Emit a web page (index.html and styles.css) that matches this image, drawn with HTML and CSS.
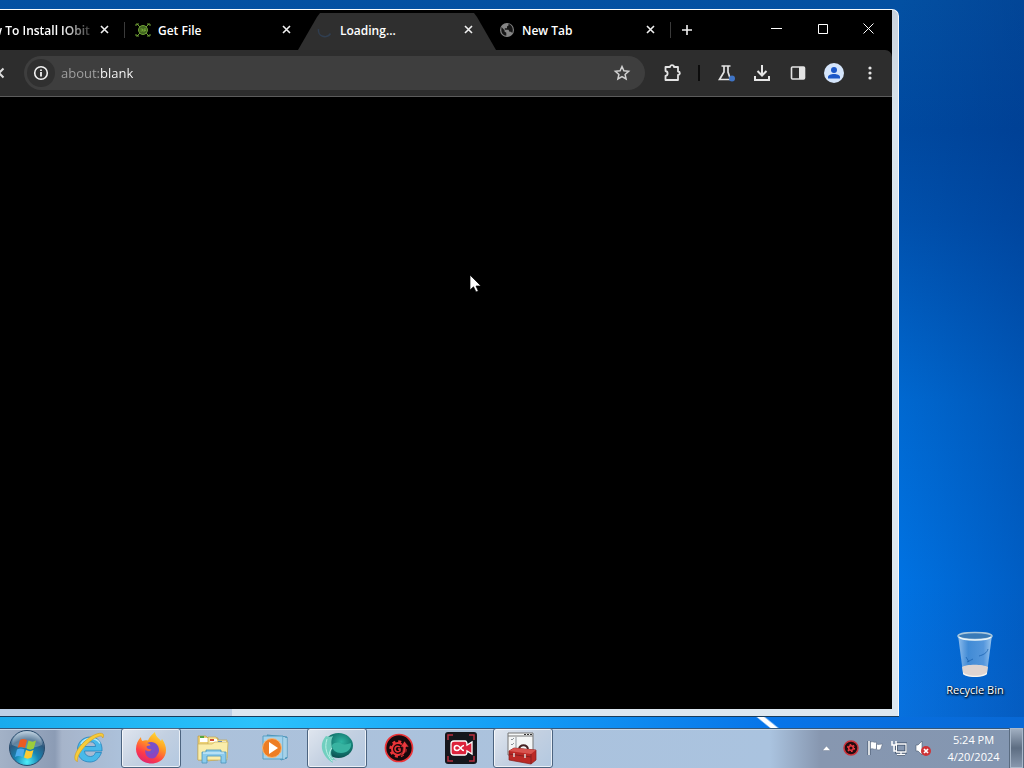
FILE: index.html
```html
<!DOCTYPE html>
<html lang="en">
<head>
  <meta charset="utf-8">
  <title>Desktop</title>
  <link rel="stylesheet" href="styles.css">
</head>
<body>
  <main class="desktop">
    <section class="window">
      <div class="browser">
        <div class="titlebar">
          <div class="tabs">
            <div class="tab">
              <span class="favicon"></span>
              <span class="tab-title faded">How To Install IObit</span>
              <button class="tab-close" aria-label="Close tab"><svg width="10" height="10" viewBox="0 0 10 10"><path d="M1 1l7 7M8 1l-7 7"/></svg></button>
            </div>
            <div class="tab divided">
              <span class="favicon">
                <svg width="16" height="16" viewBox="0 0 16 16" fill="none" stroke="#6f9f35">
                  <path d="M1 4V2h3M2 2l3 3M15 4V2h-3M14 2l-3 3M1 12v2h3M2 14l3-3M15 12v2h-3M14 14l-3-3"/>
                  <circle cx="8" cy="8" r="4.500" fill="#40651f"/>
                  <path d="M5.500 7h2v2h-2M9 10V7h2M9 8.500h2"/>
                </svg>
              </span>
              <span class="tab-title">Get File</span>
              <button class="tab-close" aria-label="Close tab"><svg width="10" height="10" viewBox="0 0 10 10"><path d="M1 1l7 7M8 1l-7 7"/></svg></button>
            </div>
            <div class="tab active">
              <span class="favicon">
                <svg width="16" height="16" viewBox="0 0 16 16" fill="none" stroke="#303e50" stroke-width="1.500"><path d="M1.500 7a6.500 6.500 0 0 0 12 4.500"/></svg>
              </span>
              <span class="tab-title">Loading...</span>
              <button class="tab-close" aria-label="Close tab"><svg width="10" height="10" viewBox="0 0 10 10"><path d="M1 1l7 7M8 1l-7 7"/></svg></button>
            </div>
            <div class="tab">
              <span class="favicon">
                <svg width="16" height="16" viewBox="0 0 16 16">
                  <circle cx="8" cy="8" r="7" fill="#858585"/>
                  <path d="M2.500 5l3 3.200v1.300l1.800 1.200v3C4.200 13.500 2.300 11 2.300 8zM9.500 1.800v1.700L8 4.500v1.800H5.800v1.500h3.700l1 2H12l1.200 1.200c1.500-3.500.3-7.800-3.700-9.200z" fill="#161616"/>
                </svg>
              </span>
              <span class="tab-title">New Tab</span>
              <button class="tab-close" aria-label="Close tab"><svg width="10" height="10" viewBox="0 0 10 10"><path d="M1 1l7 7M8 1l-7 7"/></svg></button>
            </div>
            <button class="new-tab" aria-label="New tab"><svg width="12" height="12" viewBox="0 0 12 12"><path d="M6 1v10M1 6h10"/></svg></button>
          </div>
          <div class="captions">
            <button class="caption" aria-label="Minimize"><svg width="12" height="12" viewBox="0 0 12 12"><path d="M0 5.500h11"/></svg></button>
            <button class="caption" aria-label="Maximize"><svg width="12" height="12" viewBox="0 0 12 12"><path d="M1.500 1.500h9v9h-9z"/></svg></button>
            <button class="caption" aria-label="Close"><svg width="12" height="12" viewBox="0 0 12 12"><path d="M.5.5l10 10M10.500.5l-10 10"/></svg></button>
          </div>
        </div>

        <div class="toolbar">
          <button class="tool stop" aria-label="Stop loading"><svg width="12" height="12" viewBox="0 0 12 12" fill="none" stroke="#ddd" stroke-width="2"><path d="M1.500 1.500l9 9M10.500 1.500l-9 9"/></svg></button>
          <div class="omnibox">
            <button class="site-info" aria-label="View site information">
              <svg width="16" height="16" viewBox="0 0 16 16" fill="none" stroke="#f2f2f2"><circle cx="8" cy="8" r="6.300" stroke-width="1.600"/><path d="M8 7v4.500M8 4.500V6" stroke-width="1.800"/></svg>
            </button>
            <input class="address" type="text" value="about:blank" aria-label="Address and search bar">
            <button class="tool" aria-label="Bookmark this tab">
              <svg width="18" height="18" viewBox="0 0 18 18" fill="none" stroke="#d2d2d2" stroke-width="1.500"><path d="M9 2.500l1.900 4.300 4.700.5-3.500 3.100 1 4.600L9 12.700 4.900 15l1-4.600-3.500-3.100 4.700-.5z"/></svg>
            </button>
          </div>
          <button class="tool" aria-label="Extensions">
            <svg width="20" height="20" viewBox="0 0 20 20" fill="none" stroke="#e3e3e3" stroke-width="1.800"><path d="M3.500 4H8c0-2.500 4-2.500 4 0h4v4.500c2.500.3 2.500 3.200 0 3.500v5H3.500v-4c2.800-.5 2.800-4.500 0-5z" stroke-linejoin="round"/></svg>
          </button>
          <span class="tool-divider"></span>
          <button class="tool" aria-label="Experiments">
            <svg width="20" height="20" viewBox="0 0 20 20"><path d="M5.500 3h9M8 3v6l-4.500 7.500h11L12 9V3" fill="none" stroke="#e3e3e3" stroke-width="1.700"/><circle cx="16" cy="15.500" r="3" fill="#3f74c5"/></svg>
          </button>
          <button class="tool" aria-label="Downloads">
            <svg width="18" height="18" viewBox="0 0 18 18" fill="none" stroke="#e6e6e6" stroke-width="2"><path d="M9 1v10M4.500 7L9 11.500 13.500 7M2 12v4h14v-4"/></svg>
          </button>
          <button class="tool" aria-label="Side panel">
            <svg width="16" height="16" viewBox="0 0 16 16"><rect x="1.500" y="2" width="13" height="12" rx="1" fill="none" stroke="#e3e3e3" stroke-width="1.600"/><path d="M9 2h5v12H9z" fill="#e3e3e3"/></svg>
          </button>
          <button class="tool" aria-label="Profile">
            <svg width="20" height="20" viewBox="0 0 20 20"><circle cx="10" cy="10" r="10" fill="#d5e5fb"/><circle cx="10" cy="7" r="3" fill="#1b57c8"/><path d="M4 15.500v-1.500c0-4 12-4 12 0v1.500z" fill="#1b57c8"/></svg>
          </button>
          <button class="tool" aria-label="Menu">
            <svg width="16" height="16" viewBox="0 0 16 16" fill="#e6e6e6"><circle cx="8" cy="3" r="1.600"/><circle cx="8" cy="8" r="1.600"/><circle cx="8" cy="13" r="1.600"/></svg>
          </button>
        </div>

        <div class="page"></div>
      </div>
    </section>

    <div class="shortcuts">
      <a class="shortcut" href="#">
        <svg width="42" height="48" viewBox="0 0 42 48">
          <defs>
            <linearGradient id="bin" x1="0" x2="1"><stop offset="0" stop-color="#a9cdf1" stop-opacity=".85"/><stop offset=".3" stop-color="#5c9bd8" stop-opacity=".7"/><stop offset=".75" stop-color="#70a8e2" stop-opacity=".75"/><stop offset="1" stop-color="#b7d8f5" stop-opacity=".85"/></linearGradient>
          </defs>
          <path d="M4 4l5 38c2 5 21 5 24 0l5-38z" fill="url(#bin)"/>
          <path d="M8 36c4-3 21-3 26 0l-1 6c-3 5-22 5-24 0z" fill="#ded4d0"/>
          <path d="M9 41c4 5 20 5 24 0v2c-3 4-21 4-24 0z" fill="#f7f4ef"/>
          <path d="M12 26l3 5M34 18c-1 4-5 6-9 7M13 31l6-3" fill="none" stroke="#155cab" stroke-opacity=".7"/>
          <ellipse cx="21" cy="5" rx="17" ry="3.500" fill="#397ab7" stroke="#a9c7dc" stroke-width="1.500"/>
          <path d="M5 6c4 4 28 4 32 0" fill="none" stroke="#e7f4fa" stroke-width="1.500"/>
        </svg>
        <span>Recycle Bin</span>
      </a>
    </div>

    <svg class="cursor" width="13" height="20" viewBox="0 0 13 20"><path d="M1 1v15l3.500-3.200L7 18l2.300-1-2.300-5h5z" fill="#fff" stroke="#000" stroke-width=".7"/></svg>
  </main>

  <footer class="taskbar">
    <button class="start" aria-label="Start">
      <svg width="38" height="38" viewBox="0 0 38 38">
        <defs>
          <radialGradient id="orb" cx=".5" cy=".9" r=".85"><stop offset="0" stop-color="#4ff0fa"/><stop offset=".4" stop-color="#1784b3"/><stop offset=".75" stop-color="#2d587d"/><stop offset="1" stop-color="#9bb6cc"/></radialGradient>
        </defs>
        <circle cx="19" cy="19" r="17.500" fill="url(#orb)" stroke="#294b6c"/>
        <path d="M4 16a15 14 0 0 1 30 0c-8 4-22 4-30 0z" fill="#fff" opacity=".25"/>
        <path d="M12 11c2-1.500 4-1.500 7 0l-2 8c-3-1.500-5-1.500-7.500 0z" fill="#ec5c22"/>
        <path d="M20.500 11.500c3 1.500 5 1.500 7.500 0l-2.200 8c-2.500 1.500-4.500 1.500-7.300 0z" fill="#9ccd3b"/>
        <path d="M9 20.500c2.500-1.500 4.500-1.500 7.500 0l-2 7.500c-3-1.500-5-1.500-7.500 0z" fill="#4cabed"/>
        <path d="M18 21c3 1.500 5 1.500 7.500 0l-2 7.500c-3 1.500-5 1.500-7.500 0z" fill="#fdcb32"/>
      </svg>
    </button>

    <nav class="apps">
      <button class="app" aria-label="Internet Explorer">
        <svg width="34" height="34" viewBox="0 0 34 34">
          <path d="M23.500 21.500h6C27 28 23 31 18 31 10 31 5.500 26 5.500 18.500S11 6 18.500 6C26 6 30.500 11.500 30 20H12.500c.2 3.500 2.500 5.500 6 5.500 2.300 0 4-1.200 5-4zM12.600 15.500h11c-.3-3-2.300-4.700-5.300-4.700-3.200 0-5.200 1.900-5.700 4.700z" fill="#49b9e9" stroke="#2583bc" stroke-width=".8"/>
          <path d="M9 13c2-4 6-5.500 10-5.500 4 0 7 1.500 9 5" fill="none" stroke="#b5e7fa" stroke-width="1.500"/>
          <path d="M5.500 30.500c-5-1-3-10 5-18C18 4.500 28 .5 31 3c1 1 .6 2.500-.2 4-.5-2-2-2.500-4.500-1.500-4.500 1.500-9 5-13.500 10-6 6.500-8 12-7.300 15z" fill="#f7cc3a" stroke="#d49b1b" stroke-width=".6"/>
        </svg>
      </button>
      <button class="app open" aria-label="Firefox">
        <svg width="32" height="32" viewBox="0 0 32 32">
          <defs><linearGradient id="fox" x1=".8" y1="0" x2=".3" y2="1"><stop offset="0" stop-color="#ffe536"/><stop offset=".4" stop-color="#ff9b22"/><stop offset=".75" stop-color="#ff3b48"/><stop offset="1" stop-color="#dd2373"/></linearGradient></defs>
          <path d="M6 5c0 2 .5 3 1.500 4 1.500-1 4-1 5.500-.5 1-3 4-6 7-8.500.5 5 4 6 6 9l1-2c3 4 4 8 4 11 0 8-6 13.500-14.500 13.500S1 25.500 1 17C1 12 3 8 6 5z" fill="url(#fox)"/>
          <path d="M12 11c7-3 12 2 12 7 0 4-3 7-7 7s-7-3-6.500-7c2 2 5 1.500 6-.5-3 0-5-1-5-3 1-1 2-1 4-1-.5-1.500-1.500-2-3.500-2.500z" fill="#7950c9"/>
          <path d="M11 18c0 3 4 5 6.500 3.500 3.500-1.500 3.500-5 1.500-8 5 6 4 13-2 13-4.500 0-8-4.500-6-8.500z" fill="#8c45c0"/>
        </svg>
      </button>
      <button class="app" aria-label="Windows Explorer">
        <svg width="34" height="32" viewBox="0 0 34 32">
          <path d="M2 4h8l2 2h10v22H2z" fill="#edd175" stroke="#ba9c4a" stroke-width=".7"/>
          <path d="M4 6h9v4H4z" fill="#fff"/><path d="M4 4h4v2H4z" fill="#54a83f"/>
          <path d="M12 5h8l2 3h9v18l-19 3z" fill="#f6e494" stroke="#c4a650" stroke-width=".7"/>
          <path d="M14 7h7v3h-7z" fill="#fff"/><path d="M14 7h4v2h-4z" fill="#cf4e35"/><path d="M22 9h8v3h-8z" fill="#fff"/><path d="M22 9h4v1h-4z" fill="#3d78cf"/>
          <path d="M2 12h14l3-2h13l-1 18H2z" fill="#faedaa" stroke="#cbb15c" stroke-width=".7"/>
          <path d="M6 31V20h4v-2h15v2h5v11h-5v-7H11v7z" fill="#8bcbec" stroke="#4a94bb" stroke-width=".8"/>
          <path d="M7 21h21" stroke="#e2f6ff"/>
        </svg>
      </button>
      <button class="app" aria-label="Windows Media Player">
        <svg width="30" height="28" viewBox="0 0 30 28">
          <path d="M7 1l20 2v21l-6 2z" fill="#74b4d6" stroke="#4791b6"/>
          <path d="M3 2h20v23H3z" fill="#a3d2ec" stroke="#569fc3"/><path d="M24 3v22M26 4v19" stroke="#d9effb"/>
          <circle cx="12" cy="14" r="9.500" fill="#ed7d24" stroke="#f5b878"/><path d="M9 8l9 6-9 6z" fill="#fff"/>
        </svg>
      </button>
      <button class="app open" aria-label="Web browser">
        <svg width="34" height="34" viewBox="0 0 34 34">
          <defs><radialGradient id="globe" cx=".6" cy=".35" r=".7"><stop offset="0" stop-color="#2fb5a2"/><stop offset=".6" stop-color="#13776f"/><stop offset="1" stop-color="#0b4a4c"/></radialGradient></defs>
          <ellipse cx="18.500" cy="14.500" rx="14.500" ry="12.500" fill="url(#globe)"/>
          <path d="M12 14c3-3 7-3 10-1 3 1 6 0 9-1 1 6-4 10-10 10-5 0-9-3-9-8z" fill="#38b3a1"/>
          <path d="M6 5c-8 9-4 20 7 27-2-4 0-4 4-2-6-4-7-7-5-13-1-5-1-8 1-12-2 1-5 1-7 0z" fill="#71cfbf"/>
          <path d="M7 8C4 17 7 24 12 30M12 17c-4 5-3 9 1 11" fill="none" stroke="#b9efe5"/>
        </svg>
      </button>
      <button class="app" aria-label="Driver booster">
        <svg width="30" height="30" viewBox="0 0 30 30" fill="none" stroke="#ec3438">
          <circle cx="15" cy="15" r="13.500" fill="#17090c" stroke-width="1.700"/>
          <circle cx="14" cy="16" r="6" stroke-width="2"/><circle cx="14" cy="16" r="7.500" stroke-width="2.500" stroke-dasharray="3 2.890"/>
          <path d="M16 14c-3-2-5 0-5 2s2 4 5 2v-2h-2" stroke-width="1.500"/>
          <path d="M16 23c5-1 6-4 6-9h3l-4.500-6-4 6H19c0 3 0 5-3 9z" fill="#e9383d" stroke="#260b0e" stroke-width=".6"/>
        </svg>
      </button>
      <button class="app" aria-label="Screen recorder">
        <svg width="32" height="32" viewBox="0 0 32 32" fill="none">
          <rect width="32" height="32" rx="3" fill="#15161c"/>
          <path d="M3 8V3h5M24 3h5v5M3 24v5h5M24 29h5v-5" stroke="#b92d3d" stroke-width="1.500"/>
          <path d="M9 9h11q2 0 2 4l5-3v12l-5-3q0 4-2 4H9q-3 0-3-3v-8q0-3 3-3z" fill="#dc233b" stroke="#fff" stroke-width="1.300"/>
          <path d="M19 18.500c-3 0-4-5-7-5-3.500 0-3.500 5 0 5 3 0 4-5 7-5" stroke="#fff" stroke-width="1.600"/>
        </svg>
      </button>
      <button class="app open" aria-label="Toolbox">
        <svg width="34" height="34" viewBox="0 0 34 34">
          <path d="M2 2h25v22H2z" fill="#f4f6f6" stroke="#777"/><path d="M2 5h25" stroke="#777"/><path d="M18 3.500h2M21 3.500h2M24 3.500h2" stroke="#333"/>
          <path d="M5 8l1 1 2-2M5 13l1 1 2-2M5 18l1 1 2-2M10 6v14" stroke="#8e959b" fill="none"/>
          <path d="M13 18c1-5 8-5 9 0" fill="none" stroke="#422" stroke-width="2"/>
          <path d="M3 20l5-3 22 2v10l-5 4-22-4z" fill="#bb2925" stroke="#861c1a" stroke-width=".7"/>
          <path d="M3 20l22 3 5-4-22-2z" fill="#d9544e"/><path d="M25 23v10M3 23l22 3" stroke="#852020"/><path d="M8 22v4M19 23v4" stroke="#ded9d5" stroke-width="1.500"/>
        </svg>
      </button>
    </nav>

    <div class="tray">
      <button class="tray-icon" aria-label="Show hidden icons"><svg width="10" height="6" viewBox="0 0 10 6"><path d="M.5 5.500L4.500 1l4 4.500z" fill="#fff" stroke="#65758b" stroke-width=".4"/></svg></button>
      <button class="tray-icon" aria-label="Driver booster"><svg width="16" height="16" viewBox="0 0 16 16"><circle cx="8" cy="8" r="7" fill="#240c10" stroke="#cd333a" stroke-width="1.500"/><circle cx="8" cy="8" r="2.300" fill="none" stroke="#ee3940" stroke-width="1.500"/><circle cx="8" cy="8" r="3.500" fill="none" stroke="#ee3940" stroke-width="1.200" stroke-dasharray="1.700 1.960"/></svg></button>
      <button class="tray-icon" aria-label="Action center"><svg width="16" height="16" viewBox="0 0 16 16"><path d="M2 1v14" stroke="#43536a" stroke-width="3"/><path d="M2 1v14" stroke="#fff" stroke-width="1.600"/><path d="M3.500 2c3-1 3 1 6 0v7c-3 1-3-1-6 0zM9.500 4c2 1 4 0 6 0l-2 5.500c-1 .5-3 .5-4 0z" fill="#fff" stroke="#526079" stroke-width=".5"/></svg></button>
      <button class="tray-icon" aria-label="Network"><svg width="16" height="16" viewBox="0 0 16 16" fill="none"><path d="M5.500 4H15v8H5.500zM10 12v2M6 14.500h8" stroke="#384b64" stroke-width="3"/><path d="M5.500 4H15v8H5.500zM10 12v2M6 14.500h8" stroke="#fff" stroke-width="1.300"/><path d="M1 1v4h4V1M3 5v6h3" stroke="#fff" stroke-width="1.500"/></svg></button>
      <button class="tray-icon" aria-label="Volume muted"><svg width="16" height="16" viewBox="0 0 16 16"><path d="M1 5h2l4-4v14l-4-4H1z" fill="#fff" stroke="#4a5a70" stroke-width=".6"/><circle cx="11" cy="11" r="5" fill="#cf3336"/><path d="M9 9l4 4M13 9l-4 4" stroke="#fff" stroke-width="1.700"/></svg></button>
      <div class="clock">
        <time>5:24 PM</time>
        <time>4/20/2024</time>
      </div>
      <button class="show-desktop" aria-label="Show desktop"></button>
    </div>
  </footer>
</body>
</html>
```
FILE: styles.css
```css
* {
  box-sizing: border-box;
}

body {
  display: flex;
  flex-direction: column;
  height: 100vh;
  margin: 0;
  overflow: hidden;
  font-family: "Open Sans", "Noto Sans", sans-serif;
  font-size: 11px;
}

button {
  display: flex;
  align-items: center;
  justify-content: center;
  flex: none;
  padding: 0;
  border: 0;
  background: none;
}

svg {
  display: block;
}

/* desktop */

.desktop {
  position: relative;
  display: flex;
  flex: 1;
  min-height: 0;
  padding: 9px 0 12px;
  background:
    linear-gradient(39deg, transparent 42%, #fff 47%, #fff 59%, transparent 65%) 750px 100% / 32px 11px no-repeat,
    linear-gradient(to right, #18abed, #2bc2fb 25%, #149df5 50%, #0775e9 75%, #0868d5) 0 100% / 100% 11px no-repeat,
    linear-gradient(to right, rgba(0, 45, 125, 0) 88%, rgba(0, 45, 125, 0.3)),
    linear-gradient(#0350a2, #0049a0 18%, #0050ac 30%, #0068d0 55%, #0072e2 80%, #0870dd);
}

.window {
  flex: 1;
  min-width: 0;
  display: flex;
  padding: 0 6px 7px 0;
  border: solid #f5f9fc;
  border-width: 1px 1px 0 0;
  border-radius: 0 7px 0 0;
  box-shadow: 0 1px #183c5d;
  background:
    linear-gradient(#bdd0e6, #bdd0e6) 0 100% / 232px 7px no-repeat,
    linear-gradient(#c8d1dc, #d8e4ed 15%, #dce7f0);
}

.browser {
  flex: 1;
  min-width: 0;
  display: flex;
  flex-direction: column;
  overflow: hidden;
  background: #000;
}

/* tab strip */

.titlebar {
  display: flex;
  justify-content: space-between;
  height: 40px;
}

.tabs {
  display: flex;
  align-items: center;
  margin-left: -58px;
}

.tab {
  position: relative;
  display: flex;
  align-items: center;
  gap: 7px;
  width: 182px;
  height: 40px;
  padding: 0 11px;
  color: #fff;
}

.tab.divided {
  background: linear-gradient(#3a3a3a, #3a3a3a) 0 12px / 1px 16px no-repeat;
}

.tab.active {
  isolation: isolate;
}

.tab.active::before {
  content: "";
  position: absolute;
  z-index: -1;
  inset: 3px -8px 0;
  background: #2f2f2f;
  clip-path: polygon(0 100%, 19px 4px, 22px 0, calc(100% - 22px) 0, calc(100% - 19px) 4px, 100% 100%);
}

.favicon {
  flex: none;
  width: 16px;
  height: 16px;
}

.tab-title {
  flex: 1;
  overflow: hidden;
  padding-top: 2px;
  font-size: 12px;
  font-weight: 600;
  line-height: 18px;
  white-space: nowrap;
}

.tab-title.faded {
  mask-image: linear-gradient(to right, #000 86px, transparent 122px);
}

.tab-close {
  width: 16px;
  height: 16px;
}

.tab-close svg {
  stroke: #f0f0f0;
  stroke-width: 1.6;
}

.new-tab {
  width: 34px;
  height: 40px;
  background: linear-gradient(#3a3a3a, #3a3a3a) 0 12px / 1px 16px no-repeat;
}

.new-tab svg {
  stroke: #f0f0f0;
  stroke-width: 1.6;
}

.captions {
  display: flex;
}

.caption {
  width: 46px;
  height: 38px;
}

.caption svg {
  fill: none;
  stroke: #fff;
}

/* toolbar */

.toolbar {
  display: flex;
  align-items: center;
  height: 47px;
  padding-right: 4px;
  border-bottom: 1px solid #5c5c5c;
  border-radius: 0 7px 0 0;
  background: #2d2d2d;
}

.tool {
  width: 36px;
  height: 34px;
}

.stop {
  margin: 0 7px 0 -19px;
}

.omnibox {
  flex: 1;
  min-width: 0;
  display: flex;
  align-items: center;
  height: 34px;
  margin-right: 9px;
  padding: 0 5px 0 3px;
  border-radius: 17px;
  background: #3e3e3e;
}

.site-info {
  width: 28px;
  height: 28px;
  border-radius: 50%;
  background: #303030;
}

.address {
  flex: 1;
  min-width: 0;
  height: 28px;
  margin-left: 6px;
  padding: 0;
  border: 0;
  outline: 0;
  font-family: inherit;
  font-size: 13px;
  /* scheme is dimmed, the rest is white */
  color: transparent;
  background: linear-gradient(to right, #a3a3a3 39px, #fff 39px);
  -webkit-background-clip: text;
  background-clip: text;
}

.tool-divider {
  width: 2px;
  height: 16px;
  margin: 0 8px;
  background: #0c0c0c;
}

.page {
  flex: 1;
}

/* desktop icons */

.shortcuts {
  display: flex;
  flex-direction: column;
  justify-content: flex-end;
  align-items: center;
  width: 125px;
  padding: 0 0 18px 27px;
}

.shortcut {
  display: flex;
  flex-direction: column;
  align-items: center;
  gap: 3px;
  color: #fff;
  font-weight: 500;
  line-height: 16px;
  text-decoration: none;
  text-shadow: 1px 1px 2px #000, 0 1px 2px #000;
}

.cursor {
  position: absolute;
  top: 274px;
  left: 469px;
}

/* taskbar */

.taskbar {
  display: flex;
  height: 40px;
  box-shadow: inset 0 1px #34577a, inset 0 2px #c9d8e8;
  background: linear-gradient(to right, #a3b2c7, #8c9cb5 55px, #a6b4ca 62px, #acc1da 120px, #aac3df 770px, #8797b0 820px, #8396b1);
}

.start {
  width: 54px;
  margin-right: 5px;
}

.apps {
  flex: 1;
  display: flex;
  gap: 2px;
}

.app {
  width: 60px;
  border-radius: 3px;
}

.app.open {
  border: 1px solid #4c6480;
  box-shadow: inset 0 0 0 1px rgba(255, 255, 255, 0.7);
  background: linear-gradient(135deg, #e0e6ef, #c3d0e1 50%, #b3c8e0);
}

.tray {
  display: flex;
  align-items: center;
}

.tray-icon {
  width: 24px;
  height: 38px;
}

.clock {
  display: flex;
  flex-direction: column;
  align-items: center;
  width: 74px;
  padding-left: 3px;
  color: #fff;
  line-height: 17px;
}

.show-desktop {
  align-self: stretch;
  width: 15px;
  border: solid #5a6b80;
  border-width: 0 1px;
  box-shadow: inset 0 0 0 1px #a9b8ca;
  background: linear-gradient(#a4b2c4, #5d6d82 50%, #8999af);
}
```
